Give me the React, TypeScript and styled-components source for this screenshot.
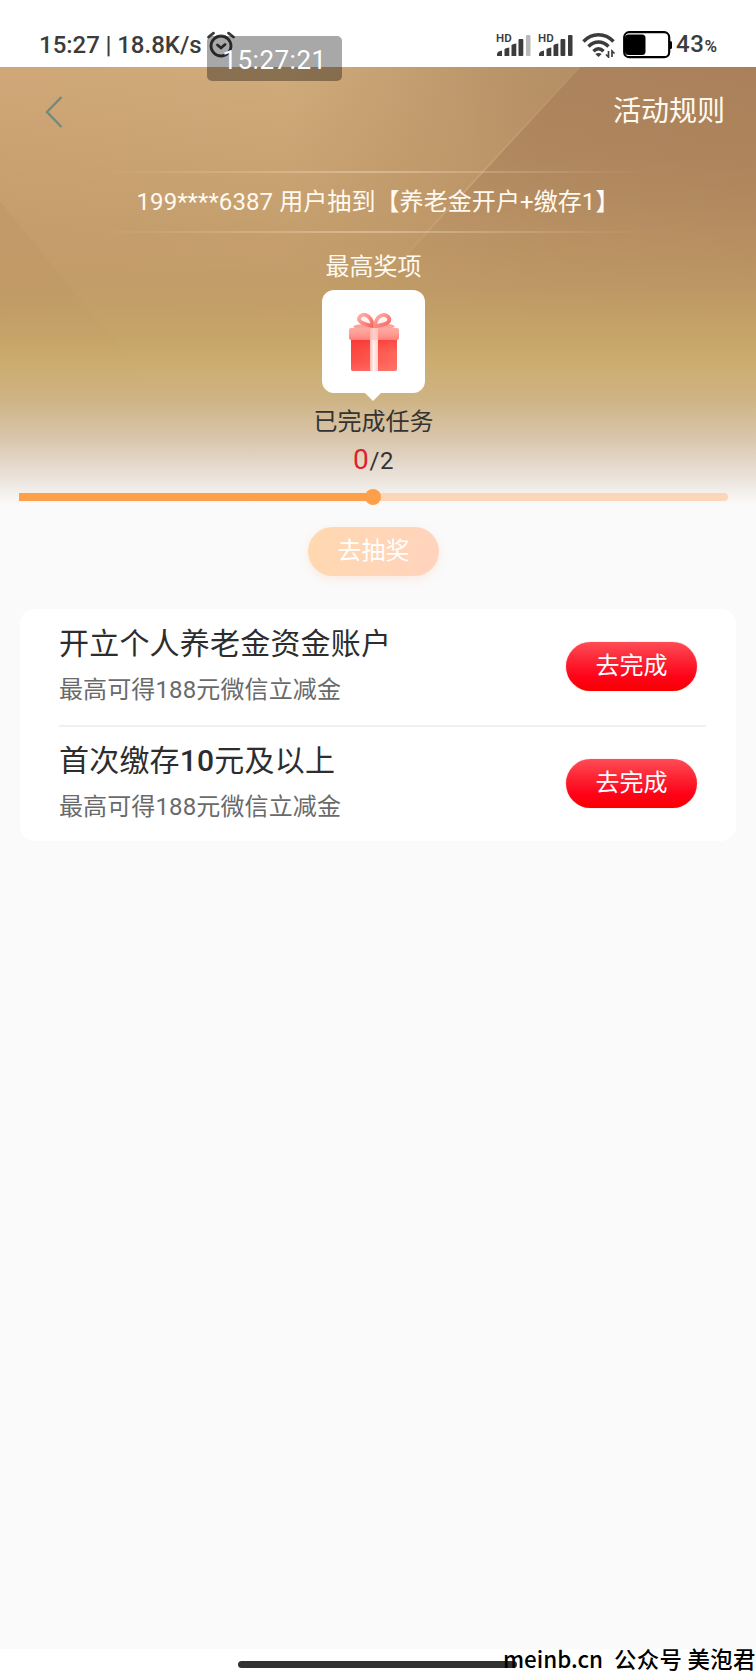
import React from 'react';
import styled, { createGlobalStyle } from 'styled-components';

const Global = createGlobalStyle`
  * { box-sizing: border-box; }
  body { margin: 0; background: #fff; }
`;

const sans = `Roboto, "Noto Sans CJK SC", sans-serif`;

const Page = styled.div`
  position: relative;
  display: flex;
  flex-direction: column;
  width: 756px;
  height: 1680px;
  overflow: hidden;
  background: #fff;
  font-family: ${sans};
  color: #333;
`;

const StatusBar = styled.header`
  display: flex;
  align-items: center;
  height: 67px;
  padding: 22px 38px 0 39px;
  background: #fff;
  color: #3c3c3c;
  font-size: 24px;
  font-weight: 500;
  line-height: 45px;
`;

const StatusText = styled.span`
  width: 167px;
  padding-top: 1px;
  word-spacing: -0.3px;
  white-space: nowrap;
`;

const StatusIcons = styled.div`
  display: flex;
  align-items: center;
  margin-left: auto;
`;

const SignalPair = styled.div`
  display: flex;
  gap: 6px;
  margin-right: 8px;
`;

const Signal = styled.svg`
  overflow: visible;
`;

const Percent = styled.span`
  width: 42px;
  margin-left: 4px;
  padding-top: 2px;
  letter-spacing: 0.6px;
  white-space: nowrap;
  small { font-size: 17px; font-weight: 600; }
`;

const TimeToast = styled.div`
  position: absolute;
  top: 36px;
  left: 207px;
  width: 135px;
  height: 45px;
  border-radius: 5px;
  background: rgba(0, 0, 0, 0.34);
  color: #fff;
  font-size: 26px;
  line-height: 48px;
  text-align: center;
  letter-spacing: 0.5px;
  z-index: 2;
`;

const Body = styled.main`
  display: flex;
  flex-direction: column;
  height: 1582px;
  background: #fafafa;
`;

const Hero = styled.section`
  position: relative;
  isolation: isolate;
  display: flex;
  flex-direction: column;
  align-items: center;
  height: 542px;
  padding-right: 9px;
`;

const Backdrop = styled.svg`
  position: absolute;
  top: 0;
  left: 0;
  z-index: -1;
`;

const NavBar = styled.nav`
  display: flex;
  align-items: center;
  justify-content: space-between;
  align-self: stretch;
  height: 90px;
  padding: 0 22px 0 43px;
`;

const RulesLink = styled.span`
  color: #fffaf0;
  font-size: 28px;
  line-height: 38px;
`;

const Notice = styled.div`
  display: flex;
  align-items: center;
  justify-content: center;
  width: 550px;
  height: 62px;
  margin-top: 14px;
  padding-left: 9px;
  border: solid transparent;
  border-width: 2px 0;
  border-image: linear-gradient(90deg, transparent, rgba(255, 235, 210, 0.35) 50%, transparent) 2;
  color: #fffaf0;
  font-size: 24px;
  line-height: 34px;
  letter-spacing: 0.08px;
  white-space: nowrap;
`;

const PrizeLabel = styled.div`
  margin-top: 16px;
  color: #fffaf0;
  font-size: 24px;
  line-height: 36px;
`;

const PrizeCard = styled.div`
  position: relative;
  display: flex;
  align-items: center;
  justify-content: center;
  width: 103px;
  height: 103px;
  margin-top: 5px;
  padding: 2px 0 0 1px;
  border-radius: 12px;
  background: #fff;
  &::after {
    content: '';
    position: absolute;
    top: 102px;
    left: 42px;
    border: 9px solid transparent;
    border-top-color: #fff;
    border-bottom: 0;
  }
`;

const DoneLabel = styled.div`
  margin-top: 11px;
  font-size: 24px;
  line-height: 36px;
`;

const Count = styled.div`
  height: 40px;
  color: #333;
  font-size: 24px;
  line-height: 40px;
  letter-spacing: 0.6px;
  b { color: #d9252b; font-size: 28px; font-weight: 400; }
`;

const Track = styled.div`
  position: relative;
  align-self: flex-start;
  width: 709px;
  height: 8px;
  margin: 13px 0 0 19px;
  border-radius: 0 4px 4px 0;
  background: #fcd6b9;
`;

const Fill = styled.div`
  width: 50%;
  height: 8px;
  background: #fe9f49;
  &::after {
    content: '';
    position: absolute;
    top: -4px;
    left: 346px;
    width: 16px;
    height: 16px;
    border-radius: 50%;
    background: #fe9f49;
  }
`;

const Pill = styled.button<{ $muted?: boolean }>`
  flex: none;
  width: 131px;
  height: 49px;
  padding: 0 0 1px;
  border: 0;
  border-radius: 25px;
  background: ${p => p.$muted
    ? 'linear-gradient(100deg, #ffd9b0, #ffd3bd)'
    : 'linear-gradient(180deg, #ff4c55 0%, #fd2736 35%, #fe0218 72%, #f80000 100%)'};
  box-shadow: ${p => p.$muted ? '0 3px 8px rgba(255, 190, 150, 0.25)' : '0 0 1px rgba(255, 60, 60, 0.7)'};
  color: #fff;
  font: 400 24px/34px ${sans};
`;

const DrawRow = styled.div`
  margin-top: 26px;
`;

const TaskCard = styled.section`
  display: flex;
  flex-direction: column;
  width: 716px;
  height: 232px;
  margin-left: 20px;
  padding: 0 30px 0 39px;
  border-radius: 15px;
  background: #fff;
`;

const Task = styled.article`
  display: flex;
  align-items: center;
  justify-content: space-between;
  height: 117px;
  padding: 0 9px 1px 0;
  & + & { border-top: 2px solid #f0f0f0; }
`;

const TaskText = styled.div`
  display: flex;
  flex-direction: column;
`;

const TaskTitle = styled.h2`
  margin: 0;
  padding-top: 2px;
  color: #2d2d2d;
  font-size: 30px;
  font-weight: 400;
  line-height: 46px;
  letter-spacing: 0.2px;
  b { font-weight: 500; }
`;

const TaskHint = styled.p`
  margin: 0;
  color: #6a6a6a;
  font-size: 24px;
  line-height: 47px;
  letter-spacing: 0.12px;
`;

const HomeArea = styled.footer`
  display: flex;
  align-items: flex-start;
  height: 31px;
  padding: 12px 0 0 238px;
  background: #fff;
`;

const HomeBar = styled.div`
  width: 279px;
  height: 7px;
  border-radius: 4px;
  background: #323232;
`;

const Watermark = styled.div`
  position: absolute;
  left: 503px;
  top: 1642px;
  display: flex;
  gap: 11px;
  color: #000;
  font: 500 22.4px/32px "Noto Sans CJK SC", sans-serif;
  white-space: nowrap;
  span + span { letter-spacing: 0.35px; }
`;

const AlarmIcon = () => (
  <svg width="30" height="28" viewBox="0 0 30 28" fill="none" stroke="#3c3c3c" strokeWidth="2.8" strokeLinecap="round">
    <circle cx="15" cy="15" r="10" />
    <path d="M2.5 6 7.5 2.2M22.5 2.2l5 3.8M11.5 14l3.5 3 4-3.5" />
  </svg>
);

const SignalIcon = ({ weak = false }: { weak?: boolean }) => (
  <Signal width="36" height="26" viewBox="0 0 36 26" fill="#3c3c3c">
    <text x="0" y="9.5" fontSize="11.5" fontWeight="600" fontFamily="Roboto, sans-serif">HD</text>
    <path d="M1 24v-2.5q1-2.5 5-3V24z" />
    <path d="M8.500 24v-7q2-1.500 4.800-1.500V24z" />
    <path d="M15.500 24V13q2-1.500 4.800-1.500V24z" />
    <rect x="22.500" y="7" width="4.800" height="17" rx="1" />
    <rect x="30" y="3" width="4.500" height="21" rx="1" fill={weak ? '#b9b9b9' : '#3c3c3c'} />
  </Signal>
);

const WifiIcon = () => (
  <svg width="34" height="26" viewBox="0 0 34 26" fill="none" stroke="#3c3c3c" strokeWidth="3.5">
    <path d="M1.500 9.500c8.500-9 21.500-9 30 0M6.500 14.500c6-6 14-6 20 0M11.500 19.200c3.300-3.300 6.700-3.300 10 0" />
    <path d="M13.300 22c2-1.500 4.400-1.500 6.400 0l-3.200 3z" fill="#3c3c3c" stroke="none" />
    <path d="M26.500 19v6l-2.500-2.500M30 25v-6l2.500 2.500" strokeWidth="1.7" />
  </svg>
);

const Battery = styled.svg`
  margin-left: 7px;
`;

const BatteryIcon = () => (
  <Battery width="49" height="28" viewBox="0 0 49 28">
    <rect x="1.200" y="1.200" width="45" height="25" rx="5" fill="#fff" stroke="#000" strokeWidth="2.2" />
    <rect x="2" y="3.500" width="20.500" height="20.500" rx="3.500" />
    <rect x="46" y="10" width="3" height="8" rx="1.500" />
  </Battery>
);

const BackIcon = () => (
  <svg width="20" height="34" viewBox="0 0 20 34" fill="none" stroke="#75887c" strokeWidth="2.4">
    <path d="M18.500 2 4 17l14.500 15" />
  </svg>
);

const GiftIcon = () => (
  <svg width="54" height="62" viewBox="0 0 54 62">
    <defs>
      <linearGradient id="box" x2="1" y2="0"><stop stopColor="#fb4740" /><stop offset=".3" stopColor="#fa5049" /><stop offset="1" stopColor="#ff6c62" /></linearGradient>
      <linearGradient id="shade" x2="0" y2="1"><stop stopColor="#f42020" stopOpacity=".65" /><stop offset=".5" stopColor="#ff4a40" stopOpacity=".15" /><stop offset="1" stopColor="#ff8078" stopOpacity=".5" /></linearGradient>
      <linearGradient id="lid" x2="0" y2="1"><stop stopColor="#ffaba4" /><stop offset=".5" stopColor="#ff9c95" /><stop offset="1" stopColor="#fb8079" /></linearGradient>
      <linearGradient id="bow" x2="1" y2="1"><stop stopColor="#ffb0aa" /><stop offset="1" stopColor="#f8655f" /></linearGradient>
      <linearGradient id="ribbon" x2="1" y2="0"><stop stopColor="#ffbbb5" /><stop offset=".45" stopColor="#fff1ee" /><stop offset="1" stopColor="#ffd0cb" /></linearGradient>
    </defs>
    <path d="M6 15c2-3 6-2 9-3 5-1 8 0 11 1 5-2 9-2 13-1 4 0 7 0 9 3l-6 2H10z" fill="#fda29b" />
    <path d="M26 14C19 13 11 10 12 6c3-6 12-4 14 8z" fill="#fff3f1" stroke="url(#bow)" strokeWidth="3.8" />
    <path d="M28 14c1-11 10-14 14-8 2 5-5 7-14 8z" fill="#fff3f1" stroke="url(#bow)" strokeWidth="3.8" />
    <rect x="4" y="24" width="46" height="35" rx="2" fill="url(#box)" />
    <rect x="4" y="24" width="46" height="35" rx="2" fill="url(#shade)" />
    <rect x="2" y="16" width="50" height="12" rx="2" fill="url(#lid)" />
    <rect x="23" y="16" width="8" height="43" fill="url(#ribbon)" />
    <rect x="23" y="16" width="8" height="12" fill="#ffb2ac" fillOpacity=".55" />
  </svg>
);

const HeroBackdrop = () => (
  <Backdrop width="756" height="438" viewBox="0 0 756 443" preserveAspectRatio="none">
    <defs>
      <linearGradient id="base" x2="1" y2="0">
        <stop stopColor="#cfa778" /><stop offset=".38" stopColor="#d0ab7b" /><stop offset=".72" stopColor="#b69066" /><stop offset="1" stopColor="#b0885f" />
      </linearGradient>
      <linearGradient id="tone" x2="0" y2="1">
        <stop offset="0" stopColor="#bd9563" stopOpacity="0" />
        <stop offset=".36" stopColor="#bd9564" stopOpacity=".55" />
        <stop offset=".5" stopColor="#c09b65" stopOpacity=".85" />
        <stop offset=".61" stopColor="#c6a469" />
        <stop offset=".67" stopColor="#ccac6f" />
        <stop offset=".76" stopColor="#ceb384" />
        <stop offset=".85" stopColor="#d9c6ad" />
        <stop offset=".93" stopColor="#e9e0d7" />
        <stop offset="1" stopColor="#fafafa" />
      </linearGradient>
      <linearGradient id="ray" x2="0" y2="1">
        <stop stopColor="#a67c57" stopOpacity=".65" /><stop offset=".35" stopColor="#a67c57" stopOpacity=".5" /><stop offset=".65" stopColor="#a67c57" stopOpacity=".12" /><stop offset="1" stopColor="#a67c57" stopOpacity="0" />
      </linearGradient>
      <linearGradient id="corner" x2="0" y2="1">
        <stop stopColor="#aa8350" stopOpacity=".14" /><stop offset="1" stopColor="#aa8350" stopOpacity="0" />
      </linearGradient>
      <linearGradient id="edge" gradientUnits="userSpaceOnUse" x1="580" y1="0" x2="390" y2="207">
        <stop stopColor="#dcc09a" stopOpacity=".1" /><stop offset=".6" stopColor="#dcc09a" stopOpacity=".3" /><stop offset="1" stopColor="#dcc09a" stopOpacity="0" />
      </linearGradient>
    </defs>
    <rect width="756" height="443" fill="url(#base)" />
    <rect width="756" height="443" fill="url(#tone)" />
    <path d="M580 0H756V260H345z" fill="url(#ray)" />
    <path d="M0 136 150 320H0z" fill="url(#corner)" />
    <path d="M580 0 390 207" stroke="url(#edge)" strokeWidth="1.5" />
  </Backdrop>
);

const tasks = [
  { id: 1, title: <>开立个人养老金资金账户</>, hint: '最高可得188元微信立减金' },
  { id: 2, title: <>首次缴存<b>10</b>元及以上</>, hint: '最高可得188元微信立减金' },
];

export default function App() {
  return (
    <Page>
      <Global />
      <StatusBar>
        <StatusText>15:27 | 18.8K/s</StatusText>
        <AlarmIcon />
        <StatusIcons>
          <SignalPair>
            <SignalIcon weak />
            <SignalIcon />
          </SignalPair>
          <WifiIcon />
          <BatteryIcon />
          <Percent>43<small>%</small></Percent>
        </StatusIcons>
      </StatusBar>
      <TimeToast>15:27:21</TimeToast>
      <Body>
        <Hero>
          <HeroBackdrop />
          <NavBar>
            <BackIcon />
            <RulesLink>活动规则</RulesLink>
          </NavBar>
          <Notice>199****6387 用户抽到【养老金开户+缴存1】</Notice>
          <PrizeLabel>最高奖项</PrizeLabel>
          <PrizeCard><GiftIcon /></PrizeCard>
          <DoneLabel>已完成任务</DoneLabel>
          <Count><b>0</b>/2</Count>
          <Track><Fill /></Track>
          <DrawRow><Pill $muted>去抽奖</Pill></DrawRow>
        </Hero>
        <TaskCard>
          {tasks.map(t => (
            <Task key={t.id}>
              <TaskText>
                <TaskTitle>{t.title}</TaskTitle>
                <TaskHint>{t.hint}</TaskHint>
              </TaskText>
              <Pill>去完成</Pill>
            </Task>
          ))}
        </TaskCard>
      </Body>
      <HomeArea><HomeBar /></HomeArea>
      <Watermark><span>meinb.cn</span><span>公众号 美泡君</span></Watermark>
    </Page>
  );
}
